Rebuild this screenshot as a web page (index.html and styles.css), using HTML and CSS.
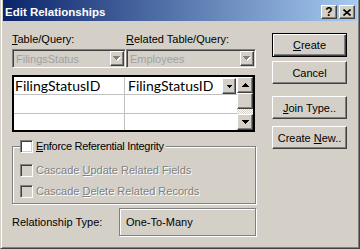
FILE: index.html
```html
<!DOCTYPE html>
<html lang="en">
  <head>
    <meta charset="UTF-8" />
    <link rel="stylesheet" href="styles.css">
    <title>Edit Relationships</title>
  </head>
  <body>
    <div class="window">
      <div class="titlebar">
        <span class="title">Edit Relationships</span>
        <div class="caption-buttons">
          <span class="cap-btn raised">?</span>
          <span class="cap-btn raised">
            <svg width="8" height="7" viewBox="0 0 8 7"><path d="M0.5 0.5L7.5 6.5M7.5 0.5L0.5 6.5" stroke="#000" stroke-width="1.6" fill="none" /></svg>
          </span>
        </div>
      </div>

      <div class="content">
        <div class="main">
          <!-- table pickers -->
          <div class="tables">
            <div class="table-col left">
              <div class="label"><u>T</u>able/Query:</div>
              <div class="combo">
                <span class="combo-text">FilingsStatus</span>
                <span class="combo-btn raised">
                  <svg width="8" height="5" viewBox="0 0 8 5"><path d="M1 1h7v1h-1v1h-1v1h-1v1h-1v-1h-1v-1h-1v-1h-1z" fill="#fff" /><path d="M0 0h7v1h-1v1h-1v1h-1v1h-1v-1h-1v-1h-1v-1h-1z" fill="#808080" /></svg>
                </span>
              </div>
            </div>
            <div class="table-col right">
              <div class="label"><u>R</u>elated Table/Query:</div>
              <div class="combo">
                <span class="combo-text">Employees</span>
                <span class="combo-btn raised">
                  <svg width="8" height="5" viewBox="0 0 8 5"><path d="M1 1h7v1h-1v1h-1v1h-1v1h-1v-1h-1v-1h-1v-1h-1z" fill="#fff" /><path d="M0 0h7v1h-1v1h-1v1h-1v1h-1v-1h-1v-1h-1v-1h-1z" fill="#808080" /></svg>
                </span>
              </div>
            </div>
          </div>

          <!-- field grid -->
          <div class="grid">
            <div class="rows">
              <div class="row">
                <div class="cell c1">FilingStatusID</div>
                <div class="cell c2">
                  <span>FilingStatusID</span>
                  <span class="cell-drop raised">
                    <svg width="5" height="3" viewBox="0 0 5 3"><path d="M0 0h5v1h-1v1h-1v1h-1v-1h-1v-1h-1z" fill="#000" /></svg>
                  </span>
                </div>
              </div>
              <div class="row">
                <div class="cell c1"></div>
                <div class="cell c2"></div>
              </div>
              <div class="row">
                <div class="cell c1"></div>
                <div class="cell c2"></div>
              </div>
            </div>
            <div class="scrollbar">
              <span class="sb-btn raised">
                <svg width="7" height="4" viewBox="0 0 7 4"><path d="M3 0h1v1h1v1h1v1h1v1h-7v-1h1v-1h1v-1h1z" fill="#000" /></svg>
              </span>
              <span class="sb-thumb raised"></span>
              <span class="sb-track"></span>
              <span class="sb-btn raised">
                <svg width="7" height="4" viewBox="0 0 7 4"><path d="M0 0h7v1h-1v1h-1v1h-1v1h-1v-1h-1v-1h-1v-1h-1z" fill="#000" /></svg>
              </span>
            </div>
          </div>

          <!-- integrity options -->
          <fieldset class="group">
            <legend class="legend"><span class="check"></span><span><u>E</u>nforce Referential Integrity</span></legend>
            <div class="check-row disabled"><span class="check"></span><span>Cascade <u>U</u>pdate Related Fields</span></div>
            <div class="check-row disabled"><span class="check"></span><span>Cascade <u>D</u>elete Related Records</span></div>
          </fieldset>

          <div class="rel-type">
            <span class="rel-label">Relationship Type:</span>
            <div class="rel-box">One-To-Many</div>
          </div>
        </div>

        <div class="buttons">
          <button class="btn default"><u>C</u>reate</button>
          <button class="btn cancel">Cancel</button>
          <button class="btn join"><u>J</u>oin Type..</button>
          <button class="btn create-new">Create <u>N</u>ew..</button>
        </div>
      </div>
    </div>
  </body>
</html>
```

FILE: styles.css
```css
/* Basic Style */

body {
  margin: 0;
  font-family: "Liberation Sans", Arial, sans-serif;
  font-size: 11px;
  color: #000;
}
u {
  text-decoration: underline;
  text-underline-offset: 1px;
}
.raised {
  background: #d4d0c8;
  border: 1px solid;
  border-color: #fff #404040 #404040 #fff;
  box-shadow: inset -1px -1px #808080;
  box-sizing: border-box;
}

/* Window frame */
.window {
  width: 360px;
  height: 249px;
  box-sizing: border-box;
  background: #d4d0c8;
  border: 1px solid;
  border-color: #d4d0c8 #404040 #404040 #d4d0c8;
  border-top: 0;
  box-shadow: inset 1px 0 #fff, inset -1px -1px #808080;
  padding: 0 2px 2px;
}
.titlebar {
  height: 21px;
  display: flex;
  justify-content: space-between;
  padding: 0 2px;
  background: linear-gradient(to right, #0a246a, #a6caf0);
}
.title {
  color: #fff;
  font-weight: 700;
  font-size: 11.5px;
  line-height: 14px;
  padding-top: 5px;
}
.caption-buttons {
  display: flex;
  gap: 2px;
  padding-top: 5px;
}
.cap-btn {
  width: 16px;
  height: 14px;
  display: flex;
  align-items: center;
  justify-content: center;
  font-weight: 700;
  font-size: 12px;
  line-height: 12px;
}

/* Layout */
.content {
  display: flex;
  gap: 16px;
  padding-left: 9px;
}
.main {
  width: 244px;
}

/* Table pickers */
.tables {
  display: flex;
  margin-top: 12px;
}
.table-col.left {
  width: 114px;
}
.table-col.right {
  flex: 1;
}
.label {
  line-height: 13px;
  height: 13px;
}
.combo {
  margin-top: 3px;
  height: 19px;
  box-sizing: border-box;
  border: 1px solid;
  border-color: #808080 #fff #fff #808080;
  box-shadow: inset 1px 1px #404040, inset -1px -1px #d4d0c8;
  padding: 1px;
  display: flex;
  justify-content: space-between;
  align-items: center;
}
.combo-text {
  color: #a0a0a0;
  padding-left: 2px;
}
.combo-btn {
  width: 14px;
  height: 15px;
  display: flex;
  align-items: center;
  justify-content: center;
}

/* Grid */
.grid {
  margin-top: 7px;
  width: 243px;
  height: 57px;
  box-sizing: border-box;
  border: 2px solid #000;
  background: #fff;
  display: flex;
}
.rows {
  flex: 1;
}
.row {
  display: flex;
  height: 18px;
  box-sizing: border-box;
  border-bottom: 1px solid #c0c0c0;
}
.row:nth-child(2) {
  height: 19px;
}
.row:last-child {
  height: 16px;
  border-bottom: 0;
}
.cell {
  font-family: Lato, sans-serif;
  font-size: 14px;
  line-height: 17px;
  box-sizing: border-box;
}
.cell.c1 {
  width: 111px;
  padding-left: 1px;
  border-right: 1px solid #c0c0c0;
}
.cell.c2 {
  flex: 1;
  padding-left: 3px;
  display: flex;
  justify-content: space-between;
}
.cell-drop {
  width: 14px;
  height: 16px;
  margin: 1px 1px 0 0;
  display: flex;
  align-items: center;
  justify-content: center;
}
.scrollbar {
  width: 16px;
  display: flex;
  flex-direction: column;
}
.sb-btn {
  height: 16px;
  display: flex;
  align-items: center;
  justify-content: center;
}
.sb-thumb {
  height: 16px;
}
.sb-track {
  flex: 1;
  background: repeating-conic-gradient(#fff 0 25%, #d4d0c8 0 50%) 0 0 / 2px 2px;
}

/* Integrity group */
.group {
  width: 244px;
  box-sizing: border-box;
  margin: 8px 0 0;
  padding: 0 0 5px 7px;
  border: 1px solid #808080;
  box-shadow: inset 1px 1px #fff, 1px 1px #fff;
  min-width: 0;
}
.legend {
  padding: 0 2px 0 0;
  background: #d4d0c8;
  display: flex;
  align-items: center;
  gap: 3px;
  height: 13px;
  line-height: 13px;
  letter-spacing: -0.3px;
}
.check {
  width: 13px;
  height: 13px;
  box-sizing: border-box;
  border: 1px solid;
  border-color: #808080 #fff #fff #808080;
  box-shadow: inset 1px 1px #404040, inset -1px -1px #d4d0c8;
  background: #fff;
}
.check-row {
  display: flex;
  align-items: center;
  gap: 3px;
  height: 13px;
  line-height: 13px;
  margin-top: 11px;
}
.check-row + .check-row {
  margin-top: 8px;
}
.disabled {
  color: #808080;
  text-shadow: 1px 1px #fff;
}
.disabled .check {
  background: #d4d0c8;
}

/* Relationship type */
.rel-type {
  display: flex;
  align-items: center;
  margin-top: 4px;
}
.rel-label {
  width: 107px;
}
.rel-box {
  flex: 1;
  height: 28px;
  box-sizing: border-box;
  border: 1px solid #808080;
  box-shadow: inset 1px 1px #fff, 1px 1px #fff;
  display: flex;
  align-items: center;
  padding-left: 6px;
}

/* Buttons */
.buttons {
  width: 75px;
  display: flex;
  flex-direction: column;
  padding-top: 12px;
}
.btn {
  height: 23px;
  margin: 0;
  padding: 0;
  font-family: "Liberation Sans", Arial, sans-serif;
  font-size: 11px;
  color: #000;
  background: #d4d0c8;
  border: 1px solid;
  border-color: #fff #404040 #404040 #fff;
  box-shadow: inset -1px -1px #808080;
  box-sizing: border-box;
}
.btn.default {
  height: 24px;
  border-color: #000;
  box-shadow: inset 1px 1px #fff, inset -1px -1px #404040, inset -2px -2px #808080;
}
.btn.cancel {
  margin-top: 4px;
}
.btn.join {
  margin-top: 12px;
}
.btn.create-new {
  margin-top: 7px;
}
```
